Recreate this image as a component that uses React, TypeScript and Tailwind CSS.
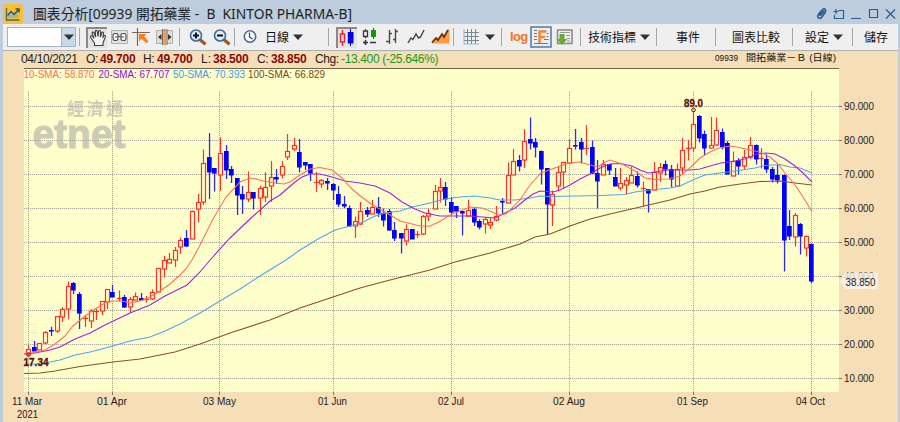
import React from 'react';

// x, high, body top, body bottom, low, up (1) or down (0)
const candles: number[][] = [
  [28.5, 345, 349, 354, 356, 1], [34.3, 341, 347, 350.5, 351, 0], [39.7, 343, 343, 350, 350, 1],
  [45.5, 331, 332, 343, 344, 1], [51.5, 326.7, 330, 331, 336, 0], [57, 316, 316, 331, 333, 1],
  [62.6, 307, 309, 317, 322, 1], [68.3, 281.5, 286, 309, 319.5, 1], [73.6, 282, 283, 290, 294, 0],
  [79, 292, 294, 313, 329, 0], [85.3, 316, 318, 318, 327, 1], [91, 309, 311, 321, 328, 1],
  [96.5, 309, 310.5, 310.5, 320, 1], [102, 301, 301, 311, 315, 1], [107.5, 289, 289, 302, 309, 1],
  [112.8, 285, 292, 297, 297, 0], [119.3, 290.5, 298, 298, 301, 1], [124.8, 295, 297, 307, 308, 0],
  [130.3, 297, 299, 307, 312.5, 1], [135.6, 292.5, 296, 299.5, 300, 1], [141.3, 293, 298, 300, 300, 0],
  [146.6, 296, 299, 300, 302.5, 1], [152.3, 289.5, 291.5, 298.5, 300, 1], [158.5, 268, 268, 291.5, 292.5, 1],
  [164, 256, 259.5, 268.5, 277.5, 1], [169.4, 253, 259, 263, 263, 1], [175, 247, 250, 260, 267, 1],
  [180.4, 237.5, 240, 247, 254, 1], [186, 230, 237.5, 245.5, 247, 0], [192.3, 210.5, 210.5, 238.5, 238.5, 1],
  [198, 194, 202, 208.5, 222.5, 1], [203.4, 149.5, 163, 202, 205, 1], [209, 133, 157, 171.5, 199, 0],
  [214.5, 168, 168, 173, 191.5, 0], [220, 137.5, 153, 175, 191, 1], [226.4, 145, 151, 169.5, 179, 0],
  [231.7, 166, 169, 175, 183, 0], [237.4, 178, 178, 194.5, 215, 0], [242.8, 186, 193.5, 198.5, 214, 0],
  [248.4, 171.5, 192, 199, 202, 1], [253.7, 192, 192, 198, 209.5, 0], [260.4, 186, 187.5, 197.5, 215, 1],
  [265.6, 172, 187, 197, 202, 1], [271, 161, 176.5, 186, 202, 1], [276.6, 169, 176.5, 178.5, 184, 0],
  [282, 161, 165.5, 174.5, 178.5, 1], [287.6, 134, 151, 157, 160, 1], [294, 138, 144.5, 148.5, 151, 1],
  [299.4, 139, 151.5, 166.5, 172.5, 0], [305, 162, 162, 165, 170, 0], [310.4, 164, 164, 172.5, 181, 0],
  [316, 172, 182, 182, 192, 1], [321.4, 179, 180, 183.5, 188, 1], [327.6, 178, 180.5, 183, 190, 0],
  [333.4, 183, 184, 189.5, 200, 0], [338.6, 186, 193.5, 203.5, 207, 0], [344.4, 196, 203.5, 206, 208, 0],
  [349.7, 205.5, 208, 226, 227, 0], [355.4, 216.5, 221, 226, 238, 1], [360.7, 202, 210.5, 223.5, 225, 1],
  [367.4, 207, 210, 213.5, 217, 0], [372.7, 200, 206.5, 213.5, 213.5, 1], [378.4, 197, 207, 213, 217, 0],
  [383.7, 208.5, 212.5, 219.5, 226.5, 0], [389, 209, 211, 230, 231, 0], [394.7, 222, 230, 237.5, 241, 0],
  [401, 233, 233, 238, 253.5, 0], [406.7, 224.5, 229, 240.5, 245.5, 1], [412, 229, 229, 238.5, 239, 0],
  [417.4, 231, 233.5, 233.5, 238, 1], [423, 215, 216, 233.5, 235, 1], [428.4, 208.5, 212.5, 215.5, 221, 1],
  [435, 185, 190.5, 208.5, 208.5, 1], [440.4, 178, 186.5, 190.5, 202.5, 1], [445.7, 182, 186.5, 198.5, 206, 0],
  [451.4, 197, 202, 212, 214, 0], [456.7, 206, 206, 211, 218, 0], [462.3, 211, 211, 212.5, 235.5, 0],
  [468.7, 200, 209.5, 215.5, 216.5, 1], [474.4, 207, 209, 221.5, 226, 0], [479.5, 219, 221, 226.5, 229.5, 0],
  [485, 217, 218.5, 223.5, 233.5, 1], [490.7, 218, 222, 224.5, 229, 1], [496.4, 206, 216, 219.5, 221.5, 1],
  [502.4, 198, 200.5, 202, 214.5, 0], [508, 162.5, 174.5, 202.5, 202.5, 1], [513.7, 149, 161, 174.5, 175, 1],
  [519, 155, 160, 165.5, 171.5, 0], [524.4, 129, 141, 159.5, 168, 1], [530, 117.5, 139, 142.5, 149.5, 0],
  [535.4, 138, 141.5, 147, 157.5, 0], [541.7, 150.5, 150.5, 169, 184.5, 0], [547.4, 168, 168, 203.5, 235, 0],
  [552.7, 190.5, 193.5, 204.5, 226, 1], [558.4, 167, 171.5, 185.5, 191.5, 1], [563.7, 162, 162, 171.5, 188.5, 1],
  [569.4, 139, 147.5, 163, 164, 1], [575.6, 129, 144.5, 145.5, 149.5, 0], [581.3, 138, 141.5, 149, 163.5, 0],
  [586.7, 125, 147.5, 148.5, 155, 1], [592, 140.5, 147, 173, 174, 0], [597.4, 160, 173, 180.5, 208.5, 0],
  [603, 160, 164, 174.5, 174.5, 1], [609.4, 164, 164, 169.5, 175, 0], [615, 168, 177, 185.5, 186, 0],
  [620.4, 168, 183, 187.5, 190.5, 1], [626, 177, 180, 184.5, 194, 1], [631.4, 166.5, 174.5, 182.5, 183, 1],
  [637, 171.5, 176, 185, 187.5, 0], [643.4, 181.5, 187.5, 187.5, 206.5, 1], [648.7, 189, 189, 192.5, 212.5, 0],
  [654.7, 162, 172, 190, 190, 1], [660, 163, 167, 172.5, 182, 1], [665.4, 160.5, 164, 169, 175.5, 0],
  [671, 165, 169, 178.5, 187, 0], [677.4, 163.5, 168.5, 185.5, 186, 1], [682.7, 138, 150, 167.5, 174.5, 1],
  [688.4, 140, 147.5, 147.5, 160.5, 1], [693.6, 111, 123.5, 147.5, 151.5, 1], [699.4, 115, 116, 137.5, 142.5, 0],
  [704.7, 130.5, 133.5, 147.5, 155.5, 0], [711, 117, 144.5, 147.5, 147.5, 1], [716.4, 117.5, 129.5, 144.5, 145.5, 1],
  [722, 128.5, 131.5, 147, 149.5, 0], [727.7, 141, 142.5, 173.5, 174.5, 0], [733, 151.5, 161, 175.5, 175.5, 1],
  [738.4, 158, 160, 165.5, 174.5, 0], [744, 150, 156.5, 165.5, 169.5, 1], [750.4, 137, 144.5, 157, 159, 1],
  [756, 144.5, 144.5, 158.5, 164.5, 0], [761.4, 148, 157.5, 158.5, 168.5, 1], [766.7, 154.5, 158.5, 168.5, 173, 0],
  [772.3, 167, 169, 178.5, 182.5, 0], [777.7, 165, 174.5, 179.5, 183.5, 0], [784.3, 174.5, 174.5, 240, 271.5, 0],
  [789.7, 210, 225.5, 236, 240, 0], [795.4, 213, 214.5, 236.5, 246.5, 1], [800.4, 223, 224, 236, 254.5, 0],
  [806.4, 235.5, 235.5, 247.5, 256.5, 1], [811.6, 243.5, 243.5, 281, 283, 0],
];

const averages = [
  { color: '#8b5224', points: '24,373.5 40,373 55,371 80,366.5 113,362 140,359 160,355 175,352 200,344 230,333 270,320 300,308 330,298 360,288 390,280 430,270 455,262 490,253 520,244 535,237 550,234 570,226 590,219 610,214 640,207 670,200 690,194 705,191 720,187 740,184 760,181.5 780,181 795,183 812,185' },
  { color: '#4fa5ee', points: '24,364 40,364 60,360 75,355 90,352 113,346 130,341 150,337 165,331 180,324 200,313 220,301 240,289 260,276 286,260 300,250 318,239 335,230 350,226 363,222 375,216 385,213 400,211 412,207 430,203 445,199 460,197 475,196 490,198 500,200 515,200 530,198 540,196 550,196.5 600,195.5 625,194.5 635,192 650,190 670,188 680,186 695,179 705,175 720,173 735,171 755,168 765,165.5 780,164.5 790,167 800,168 812,173' },
  { color: '#a51fe8', points: '24,354 35,353 50,350 60,347 75,339 90,333 105,325 130,313 150,305 165,296 175,291 187,285 200,272 211,259 230,238 250,219 270,201 280,195 295,182 302,177 310,174 320,174 332,177 345,181 360,183 375,186 390,193 402,202 415,209 425,213 440,216 455,216 470,216 495,218 505,213 515,208 525,200 533,194 540,191 553,192 560,190 570,185 580,179 590,174 600,168 610,164 620,163.5 632,166 640,170 648,173 655,172 668,170 690,170 700,169 710,166 721,163 735,161 745,159 757,154 766,153 775,154 785,159 795,166 803,173 812,182' },
  { color: '#ff7058', points: '24,354 32,353 45,350 55,344 65,336 73,326 85,316 95,309 105,303 112,301 122,301 130,303 140,301 150,297 160,291 170,284 180,275 186,269 192,260 199,247 213,219 226,197 240,182 250,178 256,179 263,181 275,183 284,184 290,182 300,175 310,169 320,167.5 332,170 342,178 352,189 359,195 371,204 378,208 385,212 400,221 420,226 430,226 439,222 450,215 460,211 470,207 482,208 490,211 498,215 506,214 520,200 530,185 541,173 552,169 560,166 568,163 580,162 590,165 598,167 605,162 610,160 622,164 635,171 645,178 655,179.5 668,179 680,176 690,168 700,158 710,152 719,148 730,146 737,147 750,150 760,152 770,157 778,164 785,173 795,185 803,197 808,205 812,212' },
];

const prices = [
  { y: 106.5, label: '90.000' },
  { y: 140.5, label: '80.000' },
  { y: 174.5, label: '70.000' },
  { y: 208.5, label: '60.000' },
  { y: 242.5, label: '50.000' },
  { y: 276.5, label: '40.000' },
  { y: 310.5, label: '30.000' },
  { y: 344.5, label: '20.000' },
  { y: 378.5, label: '10.000' },
];

const dates = [
  { x: 28.5, left: 12, width: 30, label: '11 Mar' },
  { x: 112.5, left: 97, width: 30, label: '01 Apr' },
  { x: 219.5, left: 203, width: 33, label: '03 May' },
  { x: 333.5, left: 318, width: 29, label: '01 Jun' },
  { x: 451.5, left: 438, width: 26, label: '02 Jul' },
  { x: 569.5, left: 553, width: 32, label: '02 Aug' },
  { x: 693.5, left: 677, width: 31, label: '01 Sep' },
  { x: 811.5, left: 796, width: 29, label: '04 Oct' },
];

function Candle({ data }: { data: number[] }) {
  const [x, high, top, bottom, low, up] = data;
  const left = Math.round(x - 2.5);
  const mid = left + 2.5;
  const t = Math.round(top);
  const h = Math.max(Math.round(bottom) - t, 1);
  if (!up) {
    return (
      <g fill="#0000ff">
        <rect x={mid - 0.6} y={high} width="1.3" height={low - high} fill="#2a2af2" />
        <rect x={left} y={t} width="4.7" height={h + 0.5} />
      </g>
    );
  }
  return (
    <g stroke="#ff3024" strokeWidth="1.2" fill="none">
      <path d={`M${mid} ${high}V${t}M${mid} ${t + h}V${low}`} />
      {h < 2 ? <path d={`M${left} ${t + 0.5}h5`} /> : <rect x={left + 0.5} y={t + 0.5} width="4" height={h - 0.5} fill="#ffffcc" />}
    </g>
  );
}

function Chart() {
  return (
    <svg className="block shrink-0" width="894" height="354" viewBox="3 68 894 354" fontFamily="'Liberation Sans', Arial, sans-serif">
      <rect x="24" y="68" width="815" height="324" fill="#ffffcc" />
      <path d="M24 68.5H839" stroke="#68684f" strokeWidth="1.2" />
      <g fill="#ccccb4">
        <text x="67" y="114.500" fontSize="17" fontWeight="700" fontFamily="'Noto Sans CJK TC', sans-serif" textLength="56">經濟通</text>
        <text x="32.500" y="147.500" fontSize="40" fontWeight="700" stroke="#ccccb4" textLength="93" lengthAdjust="spacingAndGlyphs">etnet</text>
      </g>
      <g fontSize="11">
        <text x="23.500" y="78" fill="#ff6b58" textLength="71" lengthAdjust="spacingAndGlyphs">10-SMA: 58.870</text>
        <text x="98.500" y="78" fill="#a000e8" textLength="71" lengthAdjust="spacingAndGlyphs">20-SMA: 67.707</text>
        <text x="173" y="78" fill="#3b9bea" textLength="72" lengthAdjust="spacingAndGlyphs">50-SMA: 70.393</text>
        <text x="248" y="78" fill="#7a4218" textLength="77" lengthAdjust="spacingAndGlyphs">100-SMA: 66.829</text>
      </g>
      {prices.map((p) => (
        <g key={p.label}>
          <path d={`M24 ${p.y}H839`} stroke="#aaaaa0" strokeDasharray="1.2 0.8" />
          <path d={`M839 ${p.y}H842`} stroke="#777" />
          <text x="844" y={p.y + 3.5} fontSize="10.500" fill="#222" textLength="30" lengthAdjust="spacingAndGlyphs">{p.label}</text>
        </g>
      ))}
      {dates.map((d) => (
        <g key={d.label}>
          <path d={`M${d.x} 91V392`} stroke="#aaaaa0" strokeDasharray="1.2 0.8" />
          <path d={`M${d.x} 392V395`} stroke="#777" />
          <text x={d.left} y="405" fontSize="10.500" fill="#222" textLength={d.width} lengthAdjust="spacingAndGlyphs">{d.label}</text>
        </g>
      ))}
      <text x="17" y="417.500" fontSize="10.500" fill="#222" textLength="21" lengthAdjust="spacingAndGlyphs">2021</text>
      {candles.map((c) => (
        <Candle key={c[0]} data={c} />
      ))}
      {averages.map((a) => (
        <polyline key={a.color} points={a.points} fill="none" stroke={a.color} strokeWidth="1.1" />
      ))}
      <g fill="none" stroke="#661010">
        <circle cx="693.500" cy="110" r="1.800" />
        <circle cx="28.500" cy="354.500" r="1.800" />
      </g>
      <g fontSize="10" fontWeight="700" fill="#5c0c0c" stroke="#5c0c0c" strokeWidth="0.300">
        <text x="684" y="107" textLength="19" lengthAdjust="spacingAndGlyphs">89.0</text>
        <text x="23.500" y="365.500" textLength="25" lengthAdjust="spacingAndGlyphs">17.34</text>
      </g>
      <path d="M840 281.500L845 272.500H888V289H845Z" fill="none" />
      <path d="M840 281.500L845 272.500H878V289H845Z" fill="#f8f5ee" fillOpacity="0.780" />
      <text x="845.500" y="286" fontSize="10.500" fill="#222" textLength="30" lengthAdjust="spacingAndGlyphs">38.850</text>
    </svg>
  );
}

function Separator() {
  return <div className="h-[18px] w-px shrink-0 bg-[#a6a6a6]" />;
}

function Caret({ className = '' }: { className?: string }) {
  return (
    <svg className={`shrink-0 ${className}`} width="10" height="6" viewBox="0 0 10 6">
      <path d="M0 .5h10L5 6z" fill="#333" />
    </svg>
  );
}

function Icon({ width = 18, className = '', children }: { width?: number; className?: string; children: React.ReactNode }) {
  return (
    <svg className={`shrink-0 ${className}`} width={width} height="18" viewBox={`0 0 ${width} 18`} fill="none">
      {children}
    </svg>
  );
}

function Magnifier({ plus = false, className = '' }: { plus?: boolean; className?: string }) {
  return (
    <Icon className={className}>
      <path d="M11.500 12l4 3.500" stroke="#a85420" strokeWidth="3.200" strokeLinecap="round" />
      <circle cx="7" cy="7.500" r="5.500" fill="#d9ecf8" stroke="#466b8f" strokeWidth="1.600" />
      <path d={plus ? 'M4 7.500h6M7 4.500v6' : 'M4 7.500h6'} stroke="#111" strokeWidth="2" />
    </Icon>
  );
}

function TitleBar() {
  return (
    <header className="flex h-6 shrink-0 items-center bg-[#bdcddd]">
      <svg className="ml-[3px] mt-[3px] shrink-0" width="20" height="20" viewBox="0 0 20 20" fill="none">
        <rect width="20" height="20" rx="3" fill="#fbc02d" />
        <path d="M3.500 4v12h13" stroke="#456579" strokeWidth="1.300" />
        <path d="M5 14V11l3-2 2 2 5-5v8z" fill="#9bb7a6" />
        <path d="M4.500 11.500L8 7.500l3 3 5-5.500M12.500 5H16v3.500" stroke="#31576f" strokeWidth="1.500" />
      </svg>
      <svg className="ml-2.5 block shrink-0" width="330" height="24">
        <text x="0" y="19" fontSize="14" fill="#222" textLength="319" lengthAdjust="spacingAndGlyphs" fontFamily="'Noto Sans', 'Noto Sans CJK TC', sans-serif">圖表分析[09939 開拓藥業 -&nbsp; B&nbsp; KINTOR PHARMA-B]</text>
      </svg>
      <svg className="ml-auto mr-1 mt-1 shrink-0" width="80" height="12" viewBox="0 0 80 12" fill="none" stroke="#285d91" strokeWidth="1.200">
        <path d="M3 7l3.500-5Q8-.2 9.500 2 9.800 3 9 4.500L6 9q-2 2.500-4 .5-1-1.500 1-4L6 2M4 8l4-5" strokeWidth="1.600" />
        <path d="M22.500 2.500h5v8h-9V7M17.500 3.500h5M20 1v5" />
        <path d="M35 10.500h10M53.500 1.500h8v8h-8z" />
        <path d="M70 1.500l9 9M79 1.500l-9 9" />
      </svg>
    </header>
  );
}

function Toolbar() {
  return (
    <div className="mx-[3px] flex h-[27px] w-[895px] shrink-0 items-center border-b border-[#aab1b5] bg-[#efefef] font-['Noto_Sans_CJK_TC',sans-serif] text-[12px] leading-[18px] text-[#111]">
      <div className="flex w-[76px] shrink-0 items-center pl-1">
        <div className="flex h-5 w-[69px] border border-[#9eb3c6] bg-white">
          <div className="ml-auto flex w-[14px] items-center justify-center border-l border-[#9eb3c6] bg-[#c8dae9]">
            <Caret />
          </div>
        </div>
      </div>
      <Separator />
      <div className="flex w-[99px] shrink-0 items-center">
        <div className="ml-1.5 flex h-[21px] w-[21px] shrink-0 items-center justify-center border-l-2 border-t-2 border-[#888] bg-[#e3e3e3]">
          <Icon>
            <path d="M5.500 16.500v-2.500L1.500 8.500C.8 7 2.500 6 3.700 7.500L5 9.500 3.200 4.500C2.800 3 4.500 2.500 5.100 4L6.700 8 6.300 2.500C6.300 1 8 1 8.300 2.500L9 7.500l.6-5C9.900 1 11.500 1.200 11.500 2.700L11.300 8l1.400-4c.6-1.400 2-.9 1.800.6L13.700 9l.8-2c.7-1 2.200-.5 1.800.9L14 14v2.500z" fill="#f4f4f4" stroke="#3c3c3c" strokeWidth="1.100" />
          </Icon>
        </div>
        <Icon width={17} className="ml-1">
          <path d="M.5 2.500h16v13H.5z" fill="#e2e2de" stroke="#b0b0b0" />
          <path d="M3 5.500h3l1 1.500v4l-1 1.500H3L2 11V7zM11 5.500h3l1 1.500v4l-1 1.500h-3L10 11V7z" fill="#f5f5f5" stroke="#555" strokeWidth="1.200" />
          <path d="M4 9h2.500M10.500 9H13M7 8.500h3" stroke="#555" />
        </Icon>
        <Icon width={20} className="ml-1">
          <path d="M0 4.500h18M5.500 0v18" stroke="#7a6a5a" strokeWidth="1.200" />
          <path d="M7 6h7.500l-2.500 2.300 4.500 5-2 2-5-4.600L7 13.500z" fill="#ff7a18" />
        </Icon>
        <Icon width={17} className="ml-1">
          <path d="M.5 2.500h16v13H.5z" fill="#deded8" stroke="#b0b0b0" />
          <path d="M6.500 1v16M11 1v16" stroke="#6b6b6b" />
          <path d="M7.200 1h3v16h-3z" fill="#ff9836" />
          <path d="M5.500 6v6L2 9zM12 6v6l3.500-3z" fill="#333" />
        </Icon>
      </div>
      <Separator />
      <div className="flex w-[54px] shrink-0 items-center">
        <Magnifier plus className="ml-[9px]" />
        <Magnifier className="ml-1.5" />
      </div>
      <Separator />
      <div className="flex w-[93px] shrink-0 items-center">
        <Icon width={14} className="ml-2">
          <circle cx="7" cy="8.500" r="5.700" fill="#fafcff" stroke="#4b6b8c" strokeWidth="1.600" />
          <path d="M6.500 4.500v4.500l3 2" stroke="#334455" strokeWidth="1.200" />
        </Icon>
        <span className="ml-2 w-6 shrink-0">日線</span>
        <Caret className="ml-1" />
      </div>
      <Separator />
      <div className="flex w-[124px] shrink-0 items-center">
        <div className="ml-[7px] flex h-[21px] w-[21px] shrink-0 items-center border-l-2 border-t-2 border-[#888] bg-[#e3e3e3]">
          <Icon>
            <path d="M4.500 1v4M4.500 13v4M2.500 5h4v8h-4z" stroke="#f02030" strokeWidth="1.400" />
            <path d="M12.500 0v17" stroke="#0000d8" />
            <path d="M9.800 3h5.700v11.500H9.800z" fill="#0000e8" />
          </Icon>
        </div>
        <Icon width={16} className="ml-[5px]">
          <path d="M3.500 1v2M3.500 8.500v2M11.500 0v11" stroke="#444" />
          <path d="M1.500 3h4v5.500h-4z" fill="#eee" stroke="#443322" strokeWidth="1.300" />
          <path d="M9 2h5v7H9z" fill="#0b9a10" />
          <path d="M1 14.500h5M3.500 12v5M8 14.500h6" stroke="#333" strokeWidth="1.600" />
        </Icon>
        <Icon width={14} className="ml-2">
          <path d="M3.500 2v14M0 13.500h3.500M3.500 5.500H6M9.500 1v14M7 11.500h2.500M9.500 3.500H12" stroke="#54483b" strokeWidth="1.400" />
        </Icon>
        <Icon width={18} className="ml-[7px]">
          <path d="M1 15l3-5 2 1.500L9 6l2.500 4 2-1 3.500-7" stroke="#4c4034" strokeWidth="1.400" />
        </Icon>
        <Icon width={19} className="ml-[6px]">
          <path d="M1 15.500v-2l4-4 2 2 4-6 2 3 4-7h1.500v14z" fill="#ff9d3c" />
          <path d="M1 14.500l4-4.500 2 2 4-6 2 3 4-7" stroke="#6b3414" strokeWidth="1.800" />
        </Icon>
      </div>
      <Separator />
      <div className="flex w-[47px] shrink-0 items-center">
        <Icon width={17} className="ml-[9px]">
          <path d="M1 4.500h15M1 8.500h15M1 12.500h15M4.500 1v15M8.500 1v15M12.500 1v15" stroke="#7b8690" />
          <path d="M1 1v15h15" stroke="#91b8d4" />
        </Icon>
        <Caret className="ml-[5px]" />
      </div>
      <Separator />
      <div className="flex w-[78px] shrink-0 items-center">
        <span className="ml-[8px] w-[20px] shrink-0 font-['Liberation_Sans',sans-serif] text-[13px] font-bold tracking-[-0.6px] text-[#ff741c]">log</span>
        <svg className="shrink-0" width="22" height="22" viewBox="0 0 22 22" fill="none">
          <path d="M1 1h20v20H1z" fill="#e7eff5" stroke="#4d7ba6" strokeWidth="1.500" />
          <path d="M4 4.500h3M4 7.500h3M4 10.500h3M4 13.500h3M4 17.500h14M16.500 10.500h2M14 13.500h4.500M17 7.500h1.500" stroke="#777" />
          <path d="M9.500 17V5.500h7M9.500 11h5.500" stroke="#ff8228" strokeWidth="2.400" />
        </svg>
        <Icon width={18} className="ml-[4px]">
          <path d="M1.500 2h14.500v13.500H1.500z" fill="#eee" stroke="#888" strokeWidth="1.500" />
          <path d="M4 4.500h10M10 7.500h4M11 10.500h3M11 13h3" stroke="#999" />
          <path d="M3.500 6h5v5h3L6 17 .5 11h3z" fill="#67ab32" />
        </Icon>
      </div>
      <Separator />
      <div className="flex w-[75px] shrink-0 items-center">
        <span className="ml-[7px] w-12 shrink-0">技術指標</span>
        <Caret className="ml-1" />
      </div>
      <Separator />
      <div className="flex w-[58px] shrink-0 pl-[19px]">事件</div>
      <Separator />
      <div className="flex w-[76px] shrink-0 pl-4">圖表比較</div>
      <Separator />
      <div className="flex w-[59px] shrink-0 items-center">
        <span className="ml-3 w-6 shrink-0">設定</span>
        <Caret className="ml-1" />
      </div>
      <Separator />
      <div className="flex shrink-0 pl-[11px]">儲存</div>
    </div>
  );
}

function QuoteBar() {
  return (
    <div className="flex h-[17px] shrink-0 items-center text-[12px] leading-[15px] text-[#222]">
      <span className="ml-[18px] w-[65px] shrink-0 tracking-[-0.35px]">04/10/2021</span>
      <span className="w-[14px] shrink-0 tracking-[-0.4px]">O:</span>
      <b className="w-[43px] shrink-0 tracking-[-0.2px] text-[#8b0808]">49.700</b>
      <span className="w-[14px] shrink-0 tracking-[-0.4px]">H:</span>
      <b className="w-[44px] shrink-0 tracking-[-0.2px] text-[#8b0808]">49.700</b>
      <span className="w-[12px] shrink-0">L:</span>
      <b className="w-[44px] shrink-0 tracking-[-0.2px] text-[#8b0808]">38.500</b>
      <span className="w-[14px] shrink-0 tracking-[-0.4px]">C:</span>
      <b className="w-[44px] shrink-0 tracking-[-0.2px] text-[#8b0808]">38.850</b>
      <span className="w-[26px] shrink-0 tracking-[-0.4px]">Chg:</span>
      <span className="shrink-0 whitespace-nowrap tracking-[-0.35px] text-[#159b15]">-13.400 (-25.646%)</span>
      <svg className="ml-auto mr-[60px] shrink-0" width="124" height="17">
        <g fontSize="9.500" fill="#111" fontFamily="'Liberation Sans', 'Noto Sans CJK TC', sans-serif">
          <text x="1" y="10" textLength="23" lengthAdjust="spacingAndGlyphs">09939</text>
          <text x="32" y="10" textLength="90" lengthAdjust="spacingAndGlyphs">開拓藥業－Ｂ (日線)</text>
        </g>
      </svg>
    </div>
  );
}

export default function App() {
  return (
    <div className="flex h-[422px] w-[900px] flex-col overflow-hidden bg-[#bdcddd] font-['Liberation_Sans',Arial,sans-serif]">
      <TitleBar />
      <Toolbar />
      <main className="ml-[3px] flex w-[895px] shrink-0 flex-col bg-[#f6deb7]">
        <QuoteBar />
        <Chart />
      </main>
    </div>
  );
}
